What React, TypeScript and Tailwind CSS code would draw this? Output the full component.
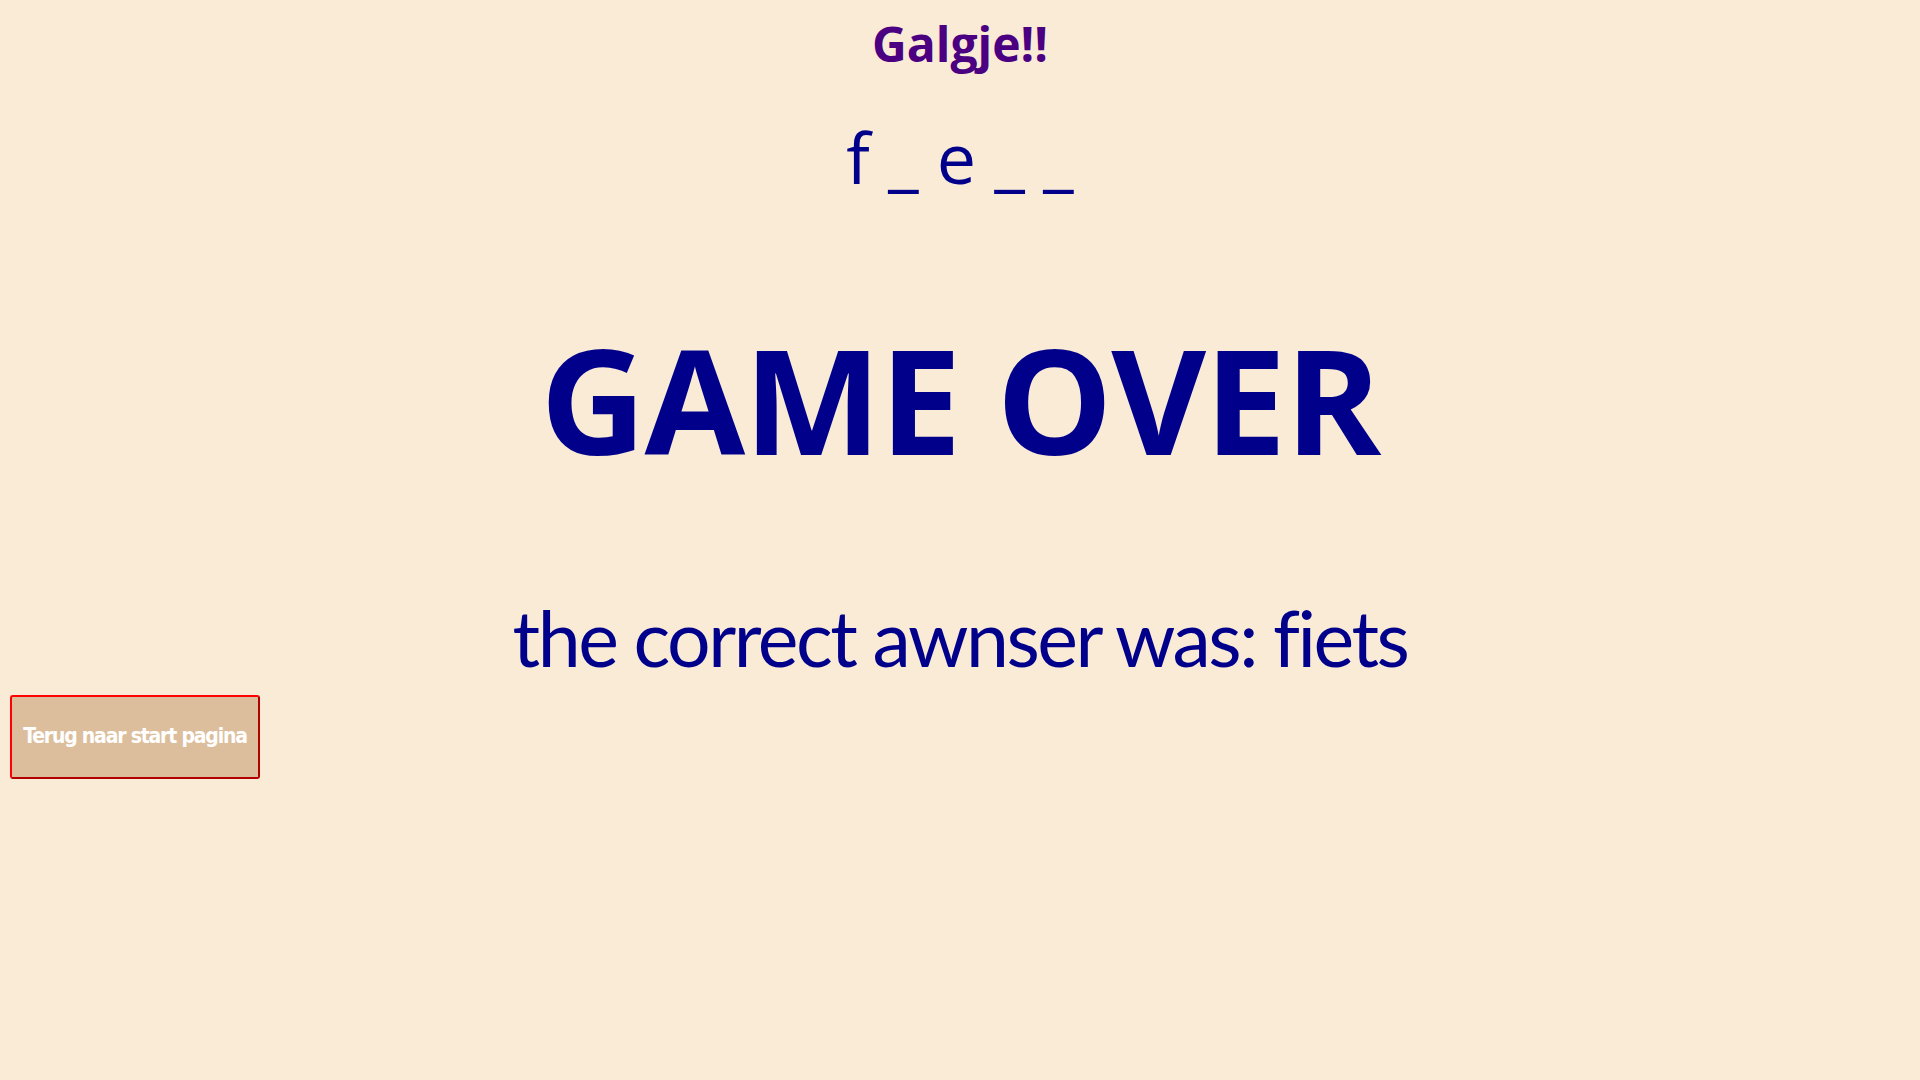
export default function App() {
  return (
    <div className="min-h-screen w-full bg-[#FAEBD7] font-['Open_Sans','Noto_Sans',sans-serif] flex flex-col items-center">
      <h1 className="mt-[20px] text-[48px] font-bold leading-none text-[#4B0082]">Galgje!!</h1>

      <p className="mt-[54px] text-[70px] leading-none text-[#00008B]">f _ e _ _</p>

      <h1 className="mt-[134px] text-[146px] font-bold leading-none tracking-[-1.5px] text-[#00008B]">GAME OVER</h1>

      <p className="mt-[127px] font-['Lato',sans-serif] text-[77px] leading-none tracking-[-2.5px] text-[#00008B]">the correct awnser was: fiets</p>

      <button className="mt-[19px] ml-[10px] self-start w-[250px] h-[84px] rounded-[3px] border-2 border-t-[#ff0000] border-l-[#ff0000] border-b-[#b00000] border-r-[#b00000] bg-[#DCBE9C] text-white text-[21px] font-bold tracking-[-1.2px] font-['DejaVu_Sans_Condensed','Liberation_Sans',sans-serif]">
        Terug naar start pagina
      </button>
    </div>
  )
}
